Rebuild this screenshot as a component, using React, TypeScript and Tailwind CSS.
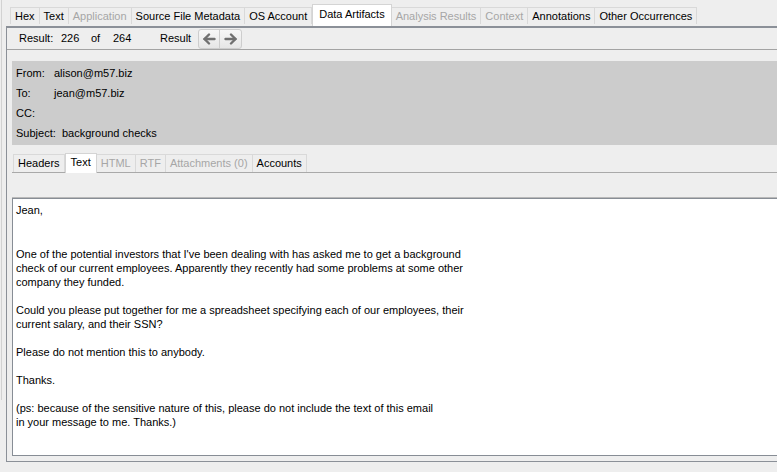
import React from "react";

const TOP_TABS = [
  { label: "Hex" },
  { label: "Text" },
  { label: "Application", disabled: true },
  { label: "Source File Metadata" },
  { label: "OS Account" },
  { label: "Data Artifacts", active: true },
  { label: "Analysis Results", disabled: true },
  { label: "Context", disabled: true },
  { label: "Annotations" },
  { label: "Other Occurrences" },
];

const MSG_TABS = [
  { label: "Headers" },
  { label: "Text", active: true },
  { label: "HTML", disabled: true },
  { label: "RTF", disabled: true },
  { label: "Attachments (0)", disabled: true },
  { label: "Accounts" },
];

const BODY = [
  "One of the potential investors that I've been dealing with has asked me to get a background",
  "check of our current employees. Apparently they recently had some problems at some other",
  "company they funded.",
  "",
  "Could you please put together for me a spreadsheet specifying each of our employees, their",
  "current salary, and their SSN?",
  "",
  "Please do not mention this to anybody.",
  "",
  "Thanks.",
  "",
  "(ps: because of the sensitive nature of this, please do not include the text of this email",
  "in your message to me. Thanks.)",
];

type Tab = { label: string; active?: boolean; disabled?: boolean };

function TabStrip({ tabs, small }: { tabs: Tab[]; small?: boolean }) {
  return (
    <div className="flex items-end">
      {tabs.map((t) =>
        t.active ? (
          <div
            key={t.label}
            className={
              small
                ? "relative z-10 -mb-px flex h-[20px] items-center border border-b-0 border-[#d4d4d4] bg-white px-[5px] pb-[2px] text-black"
                : "relative z-10 -mb-[2px] flex h-[22px] items-center border border-b-0 border-[#d4d4d4] bg-white px-[6px] pb-[3px] text-black"
            }
          >
            {t.label}
          </div>
        ) : (
          <div
            key={t.label}
            className={
              "flex items-center border border-b-0 border-l-0 border-[#d9d9d9] bg-[#eeeeee] px-[4px] first:border-l " +
              (small ? "h-[18px] " : "h-[17px] ") +
              (t.disabled ? "text-[#a6a6a6]" : "text-black")
            }
          >
            {t.label}
          </div>
        )
      )}
    </div>
  );
}

function Arrow({ dir }: { dir: "left" | "right" }) {
  return (
    <svg width="14" height="12" viewBox="0 0 14 12">
      <g
        transform={dir === "right" ? "translate(14,0) scale(-1,1)" : undefined}
        stroke="#707070"
        strokeWidth="2.4"
        fill="none"
        strokeLinecap="round"
        strokeLinejoin="round"
      >
        <path d="M7 1.5 L2.5 6 L7 10.5" />
        <path d="M2.5 6 H12.5" />
      </g>
    </svg>
  );
}

export default function App() {
  return (
    <div className="flex h-[472px] w-[777px] overflow-hidden bg-[#eeeeee] font-['Liberation_Sans',Arial,sans-serif] text-[11px] text-black">
      {/* splitter edge */}
      <div className="h-[400px] w-[2px] shrink-0 border-r border-[#d2d2d2]" />

      <div className="flex min-w-0 flex-1 flex-col">
        {/* Top tabs */}
        <div className="flex h-[26px] items-end pb-[2px] pl-[8px]">
          <TabStrip tabs={TOP_TABS} />
        </div>

        {/* Main panel */}
        <div className="ml-[4px] flex h-[436px] w-[800px] flex-col border-t-2 border-b border-l border-[#8b9098]">
          {/* Result toolbar */}
          <div className="flex h-[22px] shrink-0 items-center border-b border-[#a3a3a3] pl-[12px]">
            <span className="w-[42px]">Result:</span>
            <span className="w-[30px]">226</span>
            <span className="w-[22px]">of</span>
            <span className="w-[47px]">264</span>
            <span className="w-[38px]">Result</span>
            <div className="flex h-[20px] overflow-hidden rounded-[3px] border border-[#cdcdcd] bg-gradient-to-b from-[#f7f7f7] to-[#e6e6e6]">
              <button className="flex w-[21px] items-center justify-center border-r border-[#cdcdcd]">
                <Arrow dir="left" />
              </button>
              <button className="flex w-[21px] items-center justify-center">
                <Arrow dir="right" />
              </button>
            </div>
          </div>

          {/* Message viewer */}
          <div className="flex flex-1 flex-col pt-[11px] pb-[5px] pl-[5px]">
            {/* Header fields */}
            <div className="h-[84px] shrink-0 bg-[#cccccc] pt-[2px] pl-[4px]">
              <div className="flex h-[20px] items-center">
                <span className="w-[38px]">From:</span>
                <span>alison@m57.biz</span>
              </div>
              <div className="flex h-[20px] items-center">
                <span className="w-[38px]">To:</span>
                <span>jean@m57.biz</span>
              </div>
              <div className="flex h-[20px] items-center">
                <span className="w-[38px]">CC:</span>
              </div>
              <div className="flex h-[20px] items-center">
                <span className="w-[46px]">Subject:</span>
                <span>background checks</span>
              </div>
            </div>

            {/* Sub tabs */}
            <div className="flex h-[27px] shrink-0 items-end pl-[1px]">
              <TabStrip tabs={MSG_TABS} small />
            </div>

            {/* Empty toolbar */}
            <div className="h-[26px] shrink-0 border-t border-b border-t-[#a9a9a9] border-b-[#b9b9b9] bg-[#eeeeee]" />

            {/* Body */}
            <div className="flex-1 border-t border-b border-l border-[#878d95] bg-white pt-[4px] pl-[3px] leading-[14px]">
              <div className="mb-[30px] h-[14px]">Jean,</div>
              {BODY.map((line, i) => (
                <div key={i} className="h-[14px] whitespace-pre">
                  {line}
                </div>
              ))}
            </div>
          </div>
        </div>
      </div>
    </div>
  );
}
